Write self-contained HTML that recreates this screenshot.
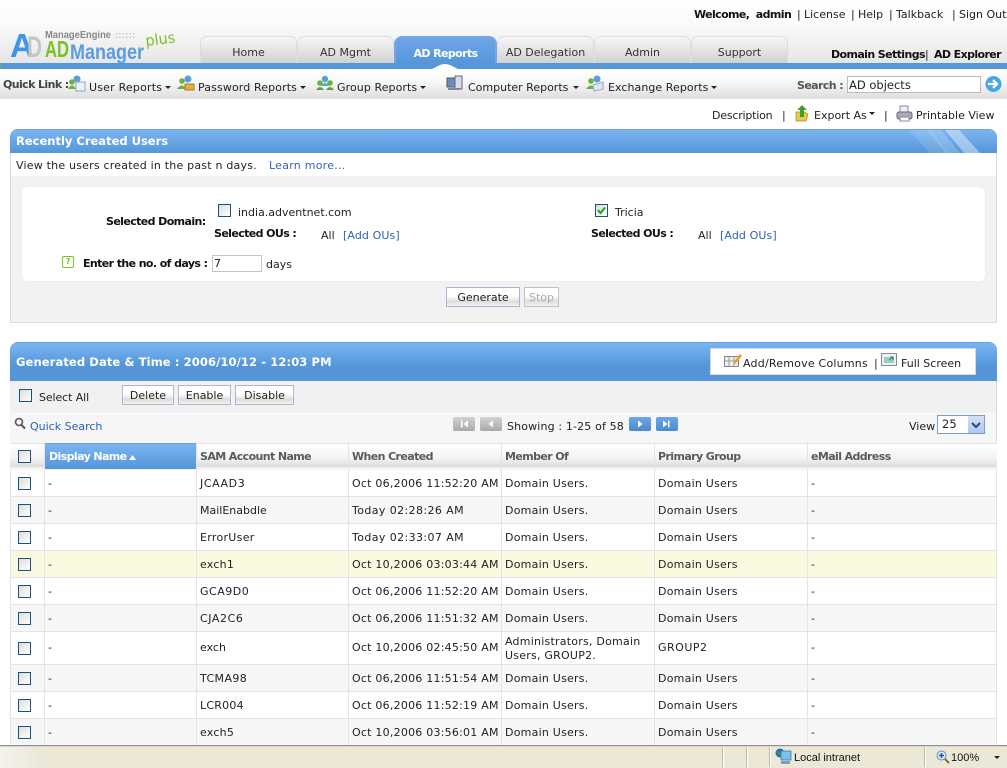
<!DOCTYPE html>
<html><head><meta charset="utf-8">
<style>
html,body{margin:0;padding:0;width:1007px;height:768px;overflow:hidden;background:#fff}
body{font-family:"DejaVu Sans",Verdana,sans-serif;font-size:11px;color:#222;position:relative}
.a{position:absolute}
.t{position:absolute;white-space:nowrap;line-height:14px;height:14px}
b{font-weight:bold;letter-spacing:-.6px}
.lnk{color:#2b62b5}
.tab{position:absolute;top:36px;height:27px;width:96px;border:1px solid #ddd;border-bottom:0;border-radius:7px 7px 0 0;background:linear-gradient(#f6f6f6,#d2d2d2);box-sizing:border-box;text-align:center;line-height:32px;color:#333}
.tabon{background:linear-gradient(#6ea5e8,#5596d8);border:2px solid #77a5ea;border-bottom:0;color:#fff;font-weight:bold;letter-spacing:-.6px;line-height:31px;border-radius:8px 8px 0 0}
.btn{position:absolute;box-sizing:border-box;height:20px;border:1px solid #a9b7d1;background:linear-gradient(#fff 45%,#ddd 75%,#f3f3f3);text-align:center;line-height:19px;color:#222}
.cb{position:absolute;width:13px;height:13px;box-sizing:border-box;border:1px solid #1c5180;background:linear-gradient(135deg,#dcdcd7,#fff)}
.row{position:absolute;left:10px;width:987px;height:27px;box-sizing:border-box;border-bottom:1px solid #e4e4e4;background:#fff}
.alt{background:#f7f7f7}
.row i{position:absolute;top:-1px;bottom:-1px;width:1px;background:#e4e4e4}
.row span{position:absolute;white-space:nowrap;top:7px;line-height:14px;letter-spacing:.23px}
.row .cb{left:8px;top:7px}
.pg{position:absolute;top:417px;width:22px;height:14px;border-radius:2px}
.gr{background:linear-gradient(#d2d2d2,#a8a8a8)}
.bl{background:linear-gradient(#6ea5e8,#4a8ad0)}
.hd{position:absolute;top:451px;line-height:12px;font-weight:bold;letter-spacing:-.6px;color:#5a5a5a;white-space:nowrap}
.sep{position:absolute;top:746px;width:1px;height:21px;background:#fff;border-left:1px solid #bcb9a6}
</style></head>
<body>
<!-- header -->
<div class="a" style="left:0;top:0;width:1007px;height:63px;background:linear-gradient(#fff,#fafafa 40%,#e6e6e6)"></div>
<div class="t" style="left:694px;top:8px;color:#111"><b>Welcome,&nbsp; admin</b></div>
<div class="t" style="left:797px;top:8px">|</div>
<div class="t" style="left:804px;top:8px">License</div>
<div class="t" style="left:851px;top:8px">|</div>
<div class="t" style="left:858px;top:8px">Help</div>
<div class="t" style="left:889px;top:8px">|</div>
<div class="t" style="left:896px;top:8px">Talkback</div>
<div class="t" style="left:952px;top:8px">|</div>
<div class="t" style="left:959px;top:8px">Sign Out</div>

<!-- logo -->
<svg class="a" style="left:0;top:20px" width="200" height="45">
<text x="10" y="37" font-family="Liberation Sans" font-weight="bold" font-size="33" fill="#3f96e8" textLength="24" lengthAdjust="spacingAndGlyphs">A</text>
<text x="27" y="37" font-family="Liberation Sans" font-weight="bold" font-size="30" fill="#c6c6c2" textLength="15" lengthAdjust="spacingAndGlyphs">D</text>
<text x="45" y="18" font-family="Liberation Sans" font-weight="bold" font-size="10.5" fill="#888" textLength="66" lengthAdjust="spacingAndGlyphs">ManageEngine</text>
<text x="115" y="18" font-family="Liberation Sans" font-weight="bold" font-size="9" fill="#bbb" textLength="20">::::::</text>
<text x="45" y="37" font-family="Liberation Sans" font-weight="bold" font-size="23" fill="#7cc225" textLength="24" lengthAdjust="spacingAndGlyphs">AD</text>
<text x="70" y="39" font-family="Liberation Sans" font-weight="bold" font-size="21" fill="#5a9ce0" textLength="74" lengthAdjust="spacingAndGlyphs">Manager</text>
<text x="146" y="26" font-family="DejaVu Sans" font-size="15" fill="#7cc225" textLength="30" lengthAdjust="spacingAndGlyphs" transform="rotate(-7 146 26)">plus</text>
</svg>

<!-- tabs -->
<div class="tab" style="left:200px;width:97px">Home</div>
<div class="tab" style="left:297px;width:97px">AD Mgmt</div>
<div class="tab tabon" style="left:394px;width:103px;height:28px">AD Reports</div>
<div class="tab" style="left:497px;width:97px">AD Delegation</div>
<div class="tab" style="left:594px;width:97px">Admin</div>
<div class="tab" style="left:691px;width:97px">Support</div>
<div class="t" style="left:831px;top:48px;color:#111"><b>Domain Settings</b></div>
<div class="t" style="left:925px;top:48px">|</div>
<div class="t" style="left:934px;top:48px;color:#111"><b>AD Explorer</b></div>

<!-- blue bar -->
<div class="a" style="left:0;top:63px;width:1007px;height:6px;background:#5596d8"></div>
<div class="a" style="left:0;top:63px;width:1px;height:6px;background:#6db33f"></div>
<svg class="a" style="left:430px;top:64px" width="30" height="5"><path d="M2 5 L10 1 Q15 -1 20 1 L28 5Z" fill="#fff"/></svg>

<!-- quick links bar -->
<div class="a" style="left:0;top:69px;width:1007px;height:30px;background:linear-gradient(#fff,#f8f8f8 40%,#dedede)"></div>
<div class="t" style="left:3px;top:78px;color:#444"><b>Quick Link :</b></div>
<svg class="a" style="left:68px;top:75px" width="18" height="17"><circle cx="9" cy="4" r="3.500" fill="#5aa0d8"/><rect x="8" y="7" width="9" height="9" fill="#eef" stroke="#8ab"/><circle cx="4" cy="7" r="2.800" fill="#6bb33f"/><path d="M0 14 q4 -7 8 0z" fill="#6bb33f"/></svg>
<div class="t" style="left:89px;top:81px;letter-spacing:.2px">User Reports</div>
<svg class="a" style="left:165px;top:86px" width="6" height="4"><path d="M0 0h6l-3 3z" fill="#222"/></svg>
<svg class="a" style="left:177px;top:75px" width="18" height="17"><circle cx="11" cy="4" r="3.500" fill="#5aa0d8"/><circle cx="5" cy="6" r="2.800" fill="#6bb33f"/><path d="M0 14 q5 -7 9 0z" fill="#6bb33f"/><rect x="8" y="9" width="9" height="6" fill="#e8b04a" stroke="#a87a20"/></svg>
<div class="t" style="left:198px;top:81px;letter-spacing:.12px">Password Reports</div>
<svg class="a" style="left:300px;top:86px" width="6" height="4"><path d="M0 0h6l-3 3z" fill="#222"/></svg>
<svg class="a" style="left:316px;top:75px" width="18" height="17"><circle cx="9" cy="4" r="3.200" fill="#5aa0d8"/><circle cx="4" cy="8" r="2.800" fill="#6bb33f"/><circle cx="14" cy="8" r="2.800" fill="#6bb33f"/><path d="M0 15 q4 -6 8 0zM10 15 q4 -6 8 0z" fill="#5aa040"/><path d="M5 11 q4 -6 8 0z" fill="#5aa0d8"/></svg>
<div class="t" style="left:337px;top:81px;letter-spacing:.08px">Group Reports</div>
<svg class="a" style="left:420px;top:86px" width="6" height="4"><path d="M0 0h6l-3 3z" fill="#222"/></svg>
<svg class="a" style="left:446px;top:75px" width="18" height="17"><rect x="1" y="3" width="11" height="9" fill="#6a8cc0" stroke="#556"/><rect x="9" y="1" width="7" height="13" fill="#d8dce8" stroke="#667"/><rect x="2" y="13" width="12" height="2" fill="#889"/></svg>
<div class="t" style="left:468px;top:81px">Computer Reports</div>
<svg class="a" style="left:573px;top:86px" width="6" height="4"><path d="M0 0h6l-3 3z" fill="#222"/></svg>
<svg class="a" style="left:586px;top:75px" width="18" height="17"><circle cx="11" cy="4" r="3.500" fill="#5aa0d8"/><circle cx="5" cy="6" r="2.800" fill="#6bb33f"/><path d="M0 14 q5 -7 9 0z" fill="#6bb33f"/><path d="M7 10 L17 7 V14 L8 16Z" fill="#dde6f2" stroke="#9ab"/></svg>
<div class="t" style="left:608px;top:81px;letter-spacing:.06px">Exchange Reports</div>
<svg class="a" style="left:711px;top:86px" width="6" height="4"><path d="M0 0h6l-3 3z" fill="#222"/></svg>
<div class="t" style="left:797px;top:79px;color:#555"><b>Search :</b></div>
<div class="a" style="left:847px;top:76px;width:134px;height:17px;box-sizing:border-box;border:1px solid #bbb;background:#fff;line-height:17px;padding-left:1px;color:#222;font-size:11.5px">AD objects</div>
<svg class="a" style="left:985px;top:75px" width="17" height="18"><circle cx="8.500" cy="9" r="8" fill="#4aa5e8"/><path d="M3 9h8M8 5l4 4-4 4" stroke="#fff" stroke-width="2.200" fill="none"/></svg>

<!-- actions -->
<div class="t" style="left:712px;top:109px;letter-spacing:-.2px">Description</div>
<div class="t" style="left:782px;top:109px">|</div>
<svg class="a" style="left:795px;top:104px" width="16" height="18"><path d="M1 8h8l4 2-2 7H1z" fill="#e8c850" stroke="#a88a20" stroke-width=".7"/><path d="M7 1l5 5h-3v7H5V6H2z" fill="#3fa02f"/></svg>
<div class="t" style="left:814px;top:109px">Export As</div>
<svg class="a" style="left:869px;top:112px" width="6" height="4"><path d="M0 0h6l-3 3z" fill="#222"/></svg>
<div class="t" style="left:884px;top:109px">|</div>
<svg class="a" style="left:896px;top:105px" width="17" height="18"><rect x="4" y="1" width="8" height="6" fill="#eef" stroke="#889"/><rect x="1" y="7" width="15" height="7" rx="2" fill="#aab" stroke="#667"/><rect x="4" y="12" width="9" height="4" fill="#fff" stroke="#889"/></svg>
<div class="t" style="left:916px;top:109px">Printable View</div>

<!-- panel 1 -->
<div class="a" style="left:10px;top:129px;width:987px;height:194px;box-sizing:border-box;border:1px solid #dcdcdc;border-top:0;background:#f2f2f2;border-radius:8px 8px 0 0"></div>
<div class="a" style="left:10px;top:129px;width:987px;height:24px;box-sizing:border-box;border-top:1px solid #6f9fe6;background:linear-gradient(#7ab5f2,#5596d8);border-radius:8px 8px 0 0;overflow:hidden">
<svg class="a" style="right:-4px;top:0" width="100" height="24"><path d="M8 0h20l20 24H30z" fill="#fff" opacity=".13"/><path d="M26 0h14l20 24H46z" fill="#fff" opacity=".2"/><path d="M44 0h14l22 24H64z" fill="#fff" opacity=".4"/></svg>
</div>
<div class="t" style="left:16px;top:134px;color:#fff;font-weight:bold;font-size:11.5px">Recently Created Users</div>
<div class="a" style="left:11px;top:153px;width:985px;height:23px;background:#fff"></div>
<div class="t" style="left:16px;top:159px;letter-spacing:.21px">View the users created in the past n days.</div>
<div class="t lnk" style="left:269px;top:159px;color:#3a5fb0;letter-spacing:.25px">Learn more...</div>
<div class="a" style="left:22px;top:187px;width:963px;height:94px;background:#fff;border-radius:6px;box-shadow:0 0 1px #ddd"></div>
<div class="t" style="left:106px;top:215px;color:#111"><b>Selected Domain:</b></div>
<div class="cb" style="left:218px;top:204px"></div>
<div class="t" style="left:238px;top:206px">india.adventnet.com</div>
<div class="t" style="left:214px;top:227px;color:#111"><b>Selected OUs :</b></div>
<div class="t" style="left:321px;top:229px">All</div>
<div class="t lnk" style="left:343px;top:229px;letter-spacing:.1px">[Add OUs]</div>
<div class="cb" style="left:595px;top:204px"></div>
<svg class="a" style="left:595px;top:204px" width="13" height="13"><path d="M3 6l2.500 3L10 3.500" stroke="#2a9a20" stroke-width="2" fill="none"/></svg>
<div class="t" style="left:615px;top:206px">Tricia</div>
<div class="t" style="left:591px;top:227px;color:#111"><b>Selected OUs :</b></div>
<div class="t" style="left:698px;top:229px">All</div>
<div class="t lnk" style="left:720px;top:229px;letter-spacing:.1px">[Add OUs]</div>
<div class="a" style="left:62px;top:256px;width:12px;height:12px;box-sizing:border-box;border:1px solid #7cc225;border-radius:2px;color:#7cc225;font-size:8px;line-height:10px;text-align:center;font-weight:bold">?</div>
<div class="t" style="left:83px;top:257px;color:#111"><b>Enter the no. of days :</b></div>
<div class="a" style="left:212px;top:255px;width:50px;height:17px;box-sizing:border-box;border:1px solid #c4c4c4;background:#fff;line-height:16px;padding-left:1px">7</div>
<div class="t" style="left:266px;top:258px">days</div>
<div class="btn" style="left:446px;top:287px;width:74px">Generate</div>
<div class="btn" style="left:524px;top:287px;width:35px;border-color:#c5c2b4;color:#aaa">Stop</div>

<!-- panel 2 header -->
<div class="a" style="left:10px;top:342px;width:987px;height:39px;box-sizing:border-box;border-top:1px solid #6f9fe6;background:linear-gradient(#7ab5f2,#5596d8 60%);border-radius:8px 8px 0 0"></div>
<div class="t" style="left:16px;top:355px;color:#fff;font-weight:bold;font-size:11.5px;letter-spacing:.11px">Generated Date &amp; Time : 2006/10/12 - 12:03 PM</div>
<div class="a" style="left:710px;top:348px;width:266px;height:27px;box-sizing:border-box;border:1px solid #d8d8d8;background:#fff"></div>
<svg class="a" style="left:724px;top:353px" width="18" height="15"><rect x="0.500" y="3.500" width="14" height="10" fill="#eee" stroke="#888"/><path d="M5 4v9M10 4v9M1 8h13" stroke="#999"/><path d="M9 10L16 1l2 2-7 8z" fill="#e8a030"/></svg>
<div class="t" style="left:743px;top:357px;letter-spacing:.22px">Add/Remove Columns</div>
<div class="t" style="left:874px;top:357px">|</div>
<svg class="a" style="left:881px;top:353px" width="16" height="14"><rect x="0.500" y="0.500" width="15" height="12" fill="#eef2f5" stroke="#889"/><rect x="3" y="4" width="10" height="6" fill="#9cc"/><path d="M8 7l4-3M9 4h3v3" stroke="#2a8a40" fill="none"/></svg>
<div class="t" style="left:901px;top:357px">Full Screen</div>

<!-- toolbars -->
<div class="a" style="left:10px;top:381px;width:987px;height:32px;background:#f1f1f1;border-top:1px solid #eee;box-sizing:border-box"></div>
<div class="a" style="left:10px;top:413px;width:987px;height:30px;background:#f6f6f6;border-top:1px solid #fafafa;box-sizing:border-box"></div>
<div class="a" style="left:996px;top:381px;width:1px;height:364px;background:#dcdcdc"></div>
<div class="cb" style="left:19px;top:389px"></div>
<div class="t" style="left:39px;top:391px;letter-spacing:-.1px">Select All</div>
<div class="btn" style="left:122px;top:385px;width:52px">Delete</div>
<div class="btn" style="left:178px;top:385px;width:53px">Enable</div>
<div class="btn" style="left:235px;top:385px;width:59px">Disable</div>
<svg class="a" style="left:14px;top:417px" width="12" height="13"><circle cx="5" cy="5" r="3.500" fill="none" stroke="#555" stroke-width="1.600"/><path d="M7.500 8l3.500 3.500" stroke="#555" stroke-width="2"/></svg>
<div class="t lnk" style="left:30px;top:420px">Quick Search</div>
<div class="pg gr" style="left:453px"></div>
<svg class="a" style="left:453px;top:417px" width="22" height="14"><path d="M8 3.500h1.500v7H8zM15 3.500v7L10.500 7z" fill="#fff"/></svg>
<div class="pg gr" style="left:480px"></div>
<svg class="a" style="left:480px;top:417px" width="22" height="14"><path d="M13 3.500v7L8.500 7z" fill="#fff"/></svg>
<div class="t" style="left:507px;top:420px;letter-spacing:.15px">Showing : 1-25 of 58</div>
<div class="pg bl" style="left:629px"></div>
<svg class="a" style="left:629px;top:417px" width="22" height="14"><path d="M9 3.500v7L13.500 7z" fill="#fff"/></svg>
<div class="pg bl" style="left:656px"></div>
<svg class="a" style="left:656px;top:417px" width="22" height="14"><path d="M7 3.500v7L11.500 7zM12 3.500h1.500v7H12z" fill="#fff"/></svg>
<div class="t" style="left:909px;top:420px">View</div>
<div class="a" style="left:937px;top:415px;width:48px;height:19px;box-sizing:border-box;border:1px solid #7f9db9;background:#fff;line-height:17px;padding-left:4px;font-size:11.5px">25</div>
<div class="a" style="left:968px;top:416px;width:16px;height:17px;background:linear-gradient(#d4e0f8,#b0c8f0)"></div>
<svg class="a" style="left:968px;top:416px" width="16" height="17"><path d="M4 7l4 4 4-4" stroke="#2d4a80" stroke-width="2" fill="none"/></svg>

<!-- table header -->
<div class="a" style="left:10px;top:443px;width:987px;height:27px;background:linear-gradient(#fff,#f3f3f3 55%,#dcdcdc 88%,#f5f5f5 90%);border-top:1px solid #e4e4e4;box-sizing:border-box"></div>
<div class="a" style="left:45px;top:443px;width:151px;height:26px;background:linear-gradient(#7ab5f2,#5596d8);border-top:1px solid #6f9fe6;box-sizing:border-box"></div>
<div class="a" style="left:44px;top:443px;width:1px;height:27px;background:#e4e4e4"></div>
<div class="a" style="left:196px;top:443px;width:1px;height:27px;background:#e4e4e4"></div>
<div class="a" style="left:348px;top:443px;width:1px;height:27px;background:#e4e4e4"></div>
<div class="a" style="left:501px;top:443px;width:1px;height:27px;background:#e4e4e4"></div>
<div class="a" style="left:654px;top:443px;width:1px;height:27px;background:#e4e4e4"></div>
<div class="a" style="left:807px;top:443px;width:1px;height:27px;background:#e4e4e4"></div>
<div class="cb" style="left:18px;top:450px"></div>
<div class="hd" style="left:49px;color:#fff">Display Name</div>
<svg class="a" style="left:129px;top:455px" width="8" height="5"><path d="M0 5L3.500 0 7 5z" fill="#fff"/></svg>
<div class="hd" style="left:200px">SAM Account Name</div>
<div class="hd" style="left:352px">When Created</div>
<div class="hd" style="left:505px">Member Of</div>
<div class="hd" style="left:658px">Primary Group</div>
<div class="hd" style="left:811px">eMail Address</div>

<!-- rows -->
<div class="row" style="top:470px"><div class="cb"></div><i style="left:34px"></i><i style="left:186px"></i><i style="left:338px"></i><i style="left:491px"></i><i style="left:644px"></i><i style="left:797px"></i><span style="left:38px">-</span><span style="left:190px;letter-spacing:.6px">JCAAD3</span><span style="left:342px">Oct 06,2006 11:52:20 AM</span><span style="left:495px">Domain Users.</span><span style="left:648px">Domain Users</span><span style="left:801px">-</span></div>
<div class="row alt" style="top:497px"><div class="cb"></div><i style="left:34px"></i><i style="left:186px"></i><i style="left:338px"></i><i style="left:491px"></i><i style="left:644px"></i><i style="left:797px"></i><span style="left:38px">-</span><span style="left:190px;letter-spacing:0">MailEnabdle</span><span style="left:342px;letter-spacing:.4px">Today 02:28:26 AM</span><span style="left:495px">Domain Users.</span><span style="left:648px">Domain Users</span><span style="left:801px">-</span></div>
<div class="row" style="top:524px"><div class="cb"></div><i style="left:34px"></i><i style="left:186px"></i><i style="left:338px"></i><i style="left:491px"></i><i style="left:644px"></i><i style="left:797px"></i><span style="left:38px">-</span><span style="left:190px;letter-spacing:.3px">ErrorUser</span><span style="left:342px;letter-spacing:.4px">Today 02:33:07 AM</span><span style="left:495px">Domain Users.</span><span style="left:648px">Domain Users</span><span style="left:801px">-</span></div>
<div class="row" style="top:551px;background:#fafae0"><div class="cb"></div><i style="left:34px"></i><i style="left:186px"></i><i style="left:338px"></i><i style="left:491px"></i><i style="left:644px"></i><i style="left:797px"></i><span style="left:38px">-</span><span style="left:190px">exch1</span><span style="left:342px">Oct 10,2006 03:03:44 AM</span><span style="left:495px">Domain Users.</span><span style="left:648px">Domain Users</span><span style="left:801px">-</span></div>
<div class="row" style="top:578px"><div class="cb"></div><i style="left:34px"></i><i style="left:186px"></i><i style="left:338px"></i><i style="left:491px"></i><i style="left:644px"></i><i style="left:797px"></i><span style="left:38px">-</span><span style="left:190px;letter-spacing:.5px">GCA9D0</span><span style="left:342px">Oct 06,2006 11:52:20 AM</span><span style="left:495px">Domain Users.</span><span style="left:648px">Domain Users</span><span style="left:801px">-</span></div>
<div class="row alt" style="top:605px"><div class="cb"></div><i style="left:34px"></i><i style="left:186px"></i><i style="left:338px"></i><i style="left:491px"></i><i style="left:644px"></i><i style="left:797px"></i><span style="left:38px">-</span><span style="left:190px;letter-spacing:.6px">CJA2C6</span><span style="left:342px">Oct 06,2006 11:51:32 AM</span><span style="left:495px">Domain Users.</span><span style="left:648px">Domain Users</span><span style="left:801px">-</span></div>
<div class="row" style="top:632px;height:33px"><div class="cb" style="top:10px"></div><i style="left:34px"></i><i style="left:186px"></i><i style="left:338px"></i><i style="left:491px"></i><i style="left:644px"></i><i style="left:797px"></i><span style="left:38px;top:9px">-</span><span style="left:190px;top:9px;letter-spacing:0">exch</span><span style="left:342px;top:9px">Oct 10,2006 02:45:50 AM</span><span style="left:495px;top:3px">Administrators, Domain<br>Users, GROUP2.</span><span style="left:648px;top:9px;letter-spacing:.5px">GROUP2</span><span style="left:801px;top:9px">-</span></div>
<div class="row alt" style="top:665px"><div class="cb"></div><i style="left:34px"></i><i style="left:186px"></i><i style="left:338px"></i><i style="left:491px"></i><i style="left:644px"></i><i style="left:797px"></i><span style="left:38px">-</span><span style="left:190px;letter-spacing:.4px">TCMA98</span><span style="left:342px">Oct 06,2006 11:51:54 AM</span><span style="left:495px">Domain Users.</span><span style="left:648px">Domain Users</span><span style="left:801px">-</span></div>
<div class="row" style="top:692px"><div class="cb"></div><i style="left:34px"></i><i style="left:186px"></i><i style="left:338px"></i><i style="left:491px"></i><i style="left:644px"></i><i style="left:797px"></i><span style="left:38px">-</span><span style="left:190px">LCR004</span><span style="left:342px">Oct 06,2006 11:52:19 AM</span><span style="left:495px">Domain Users.</span><span style="left:648px">Domain Users</span><span style="left:801px">-</span></div>
<div class="row alt" style="top:719px"><div class="cb"></div><i style="left:34px"></i><i style="left:186px"></i><i style="left:338px"></i><i style="left:491px"></i><i style="left:644px"></i><i style="left:797px"></i><span style="left:38px">-</span><span style="left:190px">exch5</span><span style="left:342px">Oct 10,2006 03:56:01 AM</span><span style="left:495px">Domain Users.</span><span style="left:648px">Domain Users</span><span style="left:801px">-</span></div>
<div class="a" style="left:10px;top:469px;width:1px;height:276px;background:#e4e4e4"></div>
<div class="a" style="left:996px;top:469px;width:1px;height:276px;background:#e4e4e4"></div>

<!-- status bar -->
<div class="a" style="left:0;top:745px;width:1007px;height:23px;background:linear-gradient(90deg,#f4f3ec,#ebe8d8 40px);border-top:1px solid #8f8f8f;box-shadow:inset 0 1px 0 #d8d6c8;box-sizing:border-box"></div>
<div class="sep" style="left:722px"></div>
<div class="sep" style="left:746px"></div>
<div class="sep" style="left:769px"></div>
<div class="sep" style="left:924px"></div>
<svg class="a" style="left:775px;top:748px" width="17" height="17"><circle cx="5" cy="5" r="4.500" fill="#2a70b8"/><path d="M2 3l3 1 1 3-3-1z" fill="#4a9a30"/><rect x="6" y="3" width="10" height="9" fill="#7cc0ea" stroke="#3a78a8" stroke-width=".8"/><rect x="6" y="13" width="9" height="3" fill="#8a9ab0"/></svg>
<div class="t" style="left:794px;top:751px;font-family:'Liberation Sans',sans-serif;font-size:11px;color:#111">Local intranet</div>
<svg class="a" style="left:936px;top:750px" width="14" height="15"><circle cx="5.500" cy="5.500" r="4.500" fill="#dcecf8" stroke="#6a8ab0"/><path d="M3 5.500h5M5.500 3v5" stroke="#1a5aa8" stroke-width="1.500"/><path d="M9 9l4 4" stroke="#8a6a30" stroke-width="2"/></svg>
<div class="t" style="left:951px;top:751px;font-family:'Liberation Sans',sans-serif;font-size:11px;color:#111">100%</div>
<svg class="a" style="left:994px;top:756px" width="7" height="4"><path d="M0 0h6l-3 3z" fill="#222"/></svg>
</body></html>
